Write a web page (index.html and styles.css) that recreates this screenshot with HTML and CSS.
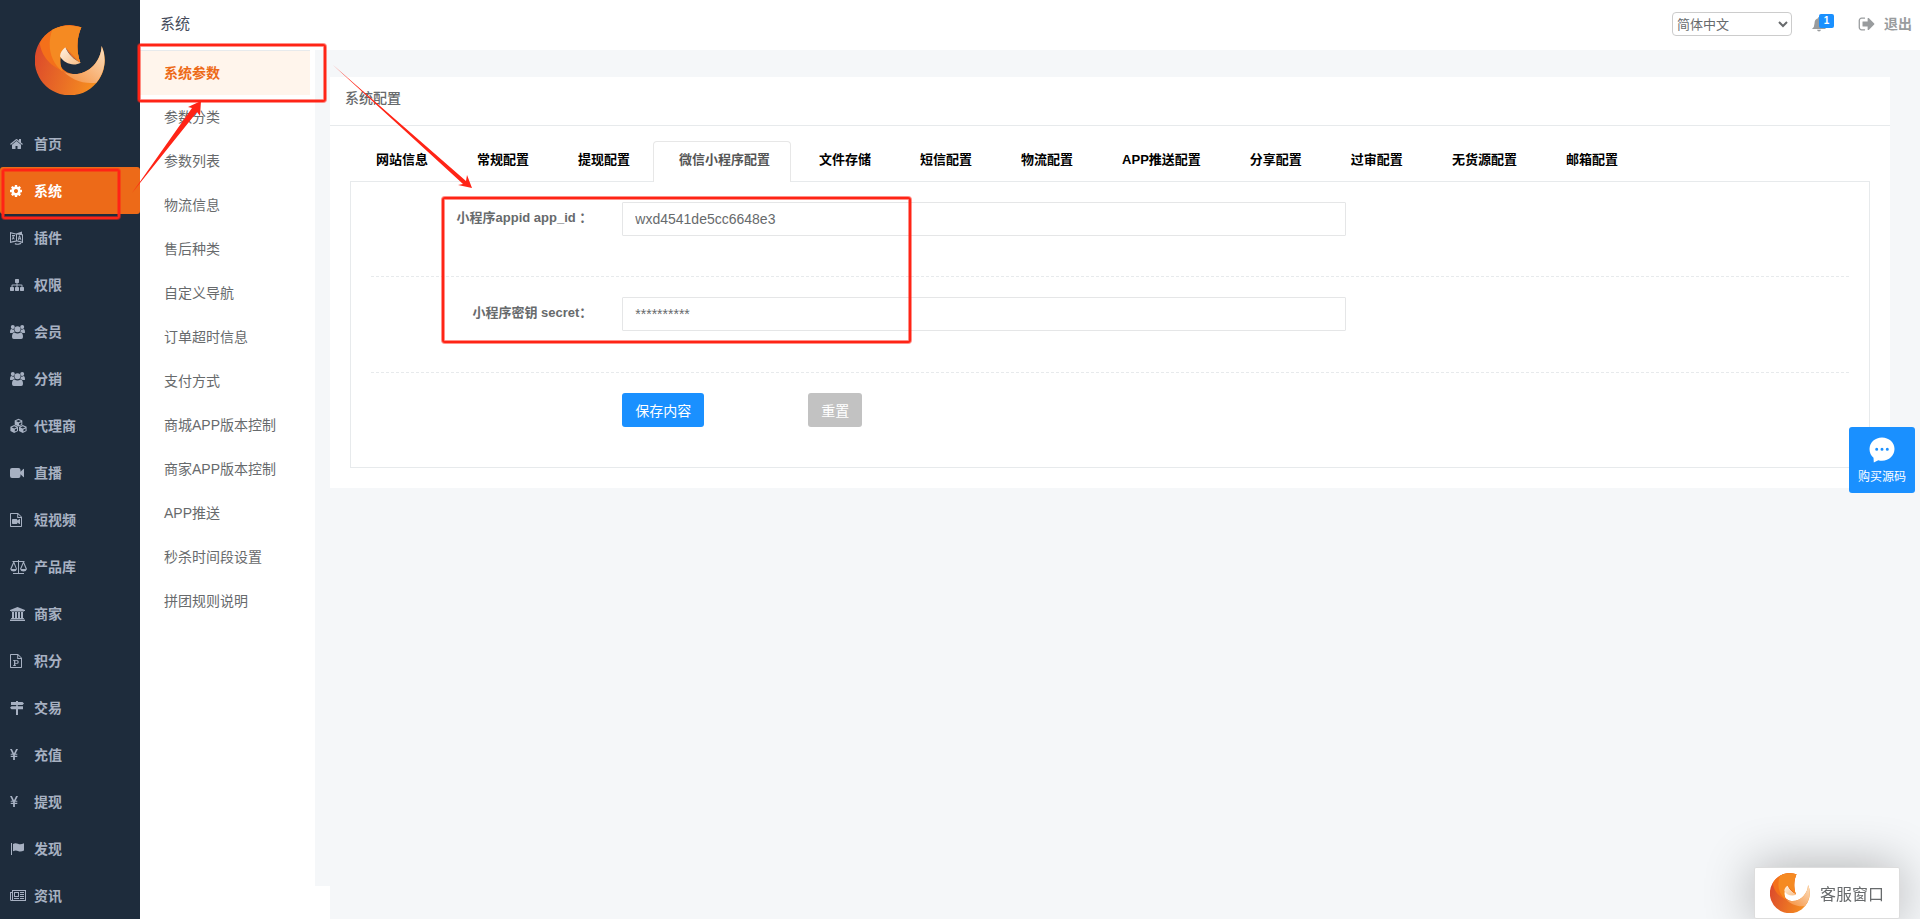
FILE: index.html
```html
<!DOCTYPE html>
<html lang="zh-CN">
<head>
<meta charset="utf-8">
<title>系统配置</title>
<link rel="stylesheet" href="styles.css">
</head>
<body>
<svg class="defs" aria-hidden="true">
  <defs>
    <linearGradient id="g-base" x1="0" y1="0.4" x2="1" y2="0.7"><stop offset="0" stop-color="#dc4a2b"/><stop offset="1" stop-color="#f8951f"/></linearGradient>
    <linearGradient id="g-tail" x1="0" y1="1" x2="1" y2="0"><stop offset="0" stop-color="#f48a35"/><stop offset="1" stop-color="#fce0c0"/></linearGradient>
    <linearGradient id="g-leaf" x1="0" y1="0" x2="1" y2="1"><stop offset="0" stop-color="#fff3e4"/><stop offset="1" stop-color="#f8bd84"/></linearGradient>
    <symbol id="logo" viewBox="0 0 210 210">
      <path fill="url(#g-base)" d="M139 7A105 105 0 1 0 200 63C198 110 160 150 114 147C88 143 70 128 74 100L91 67C100 85 115 103 136 113C122 75 126 35 139 7Z"/>
      <path fill="#f4701a" d="M14 55C30 20 70 0 105 0L139 7C126 35 122 75 136 113L91 67L74 100C70 128 88 143 114 147C80 140 25 120 14 55Z"/>
      <path fill="#f58a22" d="M52 14Q90-6 139 7C126 35 122 75 136 113L91 67C78 80 70 105 83 140C45 110 35 60 52 14Z"/>
      <path fill="url(#g-tail)" d="M200 63A105 105 0 0 1 184 173C145 178 105 165 76 128C85 142 98 147 114 147C160 150 198 110 200 63Z"/>
      <path fill="url(#g-leaf)" d="M91 67C100 88 118 105 137 113C118 124 88 118 75 94C76 82 82 75 91 67Z"/>
    </symbol>
    <symbol id="i-home" viewBox="64 -128 2048 2048" preserveAspectRatio="xMinYMid"><path d="M1472 992v480q0 26-19 45t-45 19h-384v-384h-256v384h-384q-26 0-45-19t-19-45v-480q0-1 .5-3t.5-3l575-474 575 474q1 2 1 6zm223-69l-62 74q-8 9-21 11h-3q-13 0-21-7l-692-577-692 577q-12 8-24 7-13-2-21-11l-62-74q-8-10-7-23.5t11-21.5l719-599q32-26 76-26t76 26l244 204v-195q0-14 9-23t23-9h192q14 0 23 9t9 23v408l219 182q10 8 11 21.500t-7 23.500z"/></symbol>
    <symbol id="i-cog" viewBox="128 -128 2048 2048" preserveAspectRatio="xMinYMid"><path d="M1152 896q0-106-75-181t-181-75-181 75-75 181 75 181 181 75 181-75 75-181zm512-109v222q0 12-8 23t-20 13l-185 28q-19 54-39 91 35 50 107 138 10 12 10 25t-9 23q-27 37-99 108t-94 71q-12 0-26-9l-138-108q-44 23-91 38-16 136-29 186-7 28-36 28h-222q-14 0-24.5-8.5t-11.5-21.5l-28-184q-49-16-90-37l-141 107q-10 9-25 9-14 0-25-11-126-114-165-168-7-10-7-23 0-12 8-23 15-21 51-66.5t54-70.5q-27-50-41-99l-183-27q-13-2-21-12.5t-8-23.5v-222q0-12 8-23t19-13l186-28q14-46 39-92-40-57-107-138-10-12-10-24 0-10 9-23 26-36 98.5-107.5t94.5-71.5q13 0 26 10l138 107q44-23 91-38 16-136 29-186 7-28 36-28h222q14 0 24.5 8.5t11.5 21.5l28 184q49 16 90 37l142-107q9-9 24-9 13 0 25 10 129 119 165 170 7 8 7 22 0 12-8 23-15 21-51 66.5t-54 70.5q26 50 41 98l183 28q13 2 21 12.500t8 23.500z"/></symbol>
    <symbol id="i-plugin" viewBox="0 0 17 16"><path fill-rule="evenodd" d="M0 2l6 1.500 6-2V4l1 .5v8.500l-6-1.500-7 1.500zM1 3.400v8.200l5-1.200V4.500zM7 4.600v5.600l5 1.400V5.300zM2 5h3v1H4.400L3.800 8l1 1-.6.6L3.300 8.800 2.200 9.700 1.700 9l1-1L2.200 6.500l.7-.3.4.8.4-1H2zM9 5.500h1l1.600 5-1-.3-.3-.9H9l-.2.7-1-.3zm.5 1.400L9.200 8.300h.7zM5 13q2.500 1.300 5 0l1-.6.2 1.600-1 .2q-3 1-5.500 0z"/></symbol>
    <symbol id="i-sitemap" viewBox="0 -128 2048 2048" preserveAspectRatio="xMinYMid"><path d="M1792 1248v320q0 40-28 68t-68 28h-320q-40 0-68-28t-28-68v-320q0-40 28-68t68-28h96v-192h-512v192h96q40 0 68 28t28 68v320q0 40-28 68t-68 28h-320q-40 0-68-28t-28-68v-320q0-40 28-68t68-28h96v-192h-512v192h96q40 0 68 28t28 68v320q0 40-28 68t-68 28h-320q-40 0-68-28t-28-68v-320q0-40 28-68t68-28h96v-192q0-52 38-90t90-38h512v-192h-96q-40 0-68-28t-28-68v-320q0-40 28-68t68-28h320q40 0 68 28t28 68v320q0 40-28 68t-68 28h-96v192h512q52 0 90 38t38 90v192h96q40 0 68 28t28 68z"/></symbol>
    <symbol id="i-users" viewBox="0 0 17 16"><circle cx="2.800" cy="3" r="2"/><circle cx="12.200" cy="3" r="2"/><circle cx="7.500" cy="5.200" r="3"/><path d="M0 8.500Q0 5 1.500 5Q2.800 6 4 5.600Q4 7 4.700 8Q3.300 8 2.500 9H1Q0 9 0 8.500zM15 8.500Q15 5 13.500 5Q12.200 6 11 5.600Q11 7 10.300 8Q11.700 8 12.500 9H14Q15 9 15 8.500zM2 13Q2 8.500 4.500 8.500Q7.500 10.500 10.500 8.500Q13 8.500 13 13Q13 15 11.200 15H3.800Q2 15 2 13z"/></symbol>
    <symbol id="i-cubes" viewBox="0 0 17 16"><path fill-rule="evenodd" d="M8.500.8l3.800 1.700v4.200L8.500 8.500 4.700 6.700V2.500zm0 1.200L6 3.100l2.500 1.100L11 3.100zm.6 3.200v2l2.200-1V4.200zM4.200 7.100L8 8.800V13l-3.800 1.900L.4 13V8.800zm0 1.200L1.700 9.400l2.500 1.100 2.500-1.100zm.6 3.200v2l2.200-1v-2zM12.800 7.100l3.800 1.700V13l-3.800 1.900L9 13V8.800zm0 1.200l-2.500 1.100 2.500 1.100 2.500-1.100zm.6 3.200v2l2.200-1v-2z"/></symbol>
    <symbol id="i-video" viewBox="0 0 17 16"><path d="M2 3h6.500q2 0 2 2v1.800L13.300 4Q14 3.500 14 4.300v7.400q0 .8-.7.300L10.500 9.200V11q0 2-2 2H2q-2 0-2-2V5q0-2 2-2z"/></symbol>
    <symbol id="i-filevideo" viewBox="0 0 17 16"><path fill-rule="evenodd" d="M.8 1H8l4 4v9.200q0 .8-.8.800H.8Q0 15 0 14.200V1.800Q0 1 .8 1zM1 2v12h10V6H7.200V2zm7.200.4V5H11zM2.800 7h3.700q.8 0 .8.800v.8L9.500 7H10v5h-.5L7.300 10.400v.8q0 .8-.8.800H2.800q-.8 0-.8-.8V7.800Q2 7 2.800 7z"/></symbol>
    <symbol id="i-scale" viewBox="0 0 17 16"><path d="M8 1h1v1h5.500v1H9v11h5v1H3v-1h5V3H2.500V2H8z"/><path fill-rule="evenodd" d="M3.500 2.500h.6L7 10Q6.500 12.500 3.700 12.500T.2 10zM3.800 4.500L1.500 10H6zM13.200 2.500h.6L17 10q-.8 2.500-3.500 2.500T10 10zM13.500 4.500L11.200 10h4.500z"/></symbol>
    <symbol id="i-bank" viewBox="0 0 17 16"><path d="M7.500 1L15 4v1h-1v.6H1V5H0V4zM2 6h2v6h1V6h2v6h1V6h2v6h1V6h2v6h.6q.4 0 .4.400V13H1v-.6q0-.4.400-.4H2zM.5 13.500h14q.5 0 .5.500v1H0v-1q0-.5.500-.5z"/></symbol>
    <symbol id="i-filep" viewBox="0 0 17 16"><path fill-rule="evenodd" d="M.8 1H8l4 4v9.200q0 .8-.8.800H.8Q0 15 0 14.200V1.800Q0 1 .8 1zM1 2v12h10V6H7.200V2zm7.200.4V5H11zM3 7h3.500q2.300 0 2.300 2T6.500 11H5.300v1.200H6V13H3v-.8h1V7.800H3zm2.300.8v2.400h1q1.200 0 1.200-1.200T6.300 7.800z"/></symbol>
    <symbol id="i-signs" viewBox="0 0 17 16"><path d="M6 1h2v1h4.500L14 3.500 12.500 5H1V2h5zM6 5.300h2v1H13v3H8V15H6V9.300H1.500L0 7.800l1.500-1.500H6z"/></symbol>
    <symbol id="i-yen" viewBox="0 0 17 16"><path d="M0 2h1.900L4 6.300 6.100 2H8L5.600 6.700h1.700v1.100H4.900v1h2.400v1.100H4.900V13H3.100V9.900H.7V8.800h2.400v-1H.7V6.700h1.700z"/></symbol>
    <symbol id="i-flag" viewBox="0 0 17 16"><path d="M1 2h1v12H1zM3 3q2.500-1.500 5-.2t6-.6v7.300q-3.500 1.600-6 .4T3 10.300z"/></symbol>
    <symbol id="i-news" viewBox="0 0 17 16"><path fill-rule="evenodd" d="M2 2h14v11H1.500Q0 13 0 11.500V4h2zM3 3v9h12V3zM1 5v6.500q0 .5.500.5T2 11.500V5zM4 4h5v5H4zm1 1v3h3V5zM10 4h4v1h-4zM10 6h4v1h-4zM10 8h4v1h-4zM4 10h5v1H4zM10 10h4v1h-4z"/></symbol>
    <symbol id="i-bell" viewBox="1 0 14 15"><path d="M8 0q1 0 1 1.200Q12.500 2 12.500 6.500q0 3.500 2.500 5.500H1Q3.500 10 3.500 6.500 3.500 2 7 1.200 7 0 8 0zM6 12.700h4Q9.700 14.500 8 14.500T6 12.700z"/></symbol>
    <symbol id="i-signout" viewBox="0 0 1792 1792"><path d="M704 1440q0 4 1 20t.5 26.500-3 23.500-10 19.500-20.500 6.500h-320q-119 0-203.500-84.500t-84.500-203.500v-704q0-119 84.500-203.500t203.500-84.500h320q13 0 22.500 9.500t9.500 22.500q0 4 1 20t.5 26.500-3 23.500-10 19.500-20.500 6.500h-320q-66 0-113 47t-47 113v704q0 66 47 113t113 47h312l11.500 1 11.500 3 8 5.500 7 9 2 13.500zm928-544q0 26-19 45l-544 544q-19 19-45 19t-45-19-19-45v-288h-448q-26 0-45-19t-19-45v-384q0-26 19-45t45-19h448v-288q0-26 19-45t45-19 45 19l544 544q19 19 19 45z"/></symbol>
    <symbol id="i-chat" viewBox="0 0 26 26"><path fill-rule="evenodd" d="M13 .5C6 .5 .5 5.500 .5 12c0 3.600 1.500 6.500 4 8.800L4.800 25.500l4.500-2.200q1.800.5 3.700.5c7 0 12.500-5.300 12.500-11.800S20 .5 13 .5zM7.700 10.700a1.500 1.500 0 1 1 0 3 1.500 1.500 0 0 1 0-3zm5.300 0a1.500 1.500 0 1 1 0 3 1.500 1.500 0 0 1 0-3zm5.300 0a1.500 1.500 0 1 1 0 3 1.500 1.500 0 0 1 0-3z"/></symbol>
  </defs>
</svg>

<div class="app">
  <aside class="sidebar">
    <a class="brand" href="#" aria-label="首页"><svg><use href="#logo"/></svg></a>
    <nav class="menu">
      <a href="#"><svg><use href="#i-home"/></svg>首页</a>
      <a href="#" class="active"><svg><use href="#i-cog"/></svg>系统</a>
      <a href="#"><svg><use href="#i-plugin"/></svg>插件</a>
      <a href="#"><svg><use href="#i-sitemap"/></svg>权限</a>
      <a href="#"><svg><use href="#i-users"/></svg>会员</a>
      <a href="#"><svg><use href="#i-users"/></svg>分销</a>
      <a href="#"><svg><use href="#i-cubes"/></svg>代理商</a>
      <a href="#"><svg><use href="#i-video"/></svg>直播</a>
      <a href="#"><svg><use href="#i-filevideo"/></svg>短视频</a>
      <a href="#"><svg><use href="#i-scale"/></svg>产品库</a>
      <a href="#"><svg><use href="#i-bank"/></svg>商家</a>
      <a href="#"><svg><use href="#i-filep"/></svg>积分</a>
      <a href="#"><svg><use href="#i-signs"/></svg>交易</a>
      <a href="#"><svg><use href="#i-yen"/></svg>充值</a>
      <a href="#"><svg><use href="#i-yen"/></svg>提现</a>
      <a href="#"><svg><use href="#i-flag"/></svg>发现</a>
      <a href="#"><svg><use href="#i-news"/></svg>资讯</a>
    </nav>
  </aside>

  <div class="page">
    <header class="topbar">
      <h1>系统</h1>
      <div class="tools">
        <select aria-label="语言"><option>简体中文</option></select>
        <a class="bell" href="#" aria-label="消息"><svg><use href="#i-bell"/></svg><span class="badge">1</span></a>
        <a class="logout" href="#"><svg><use href="#i-signout"/></svg>退出</a>
      </div>
    </header>

    <div class="columns">
      <div class="side">
        <nav class="submenu">
          <a href="#" class="active">系统参数</a>
          <a href="#">参数分类</a>
          <a href="#">参数列表</a>
          <a href="#">物流信息</a>
          <a href="#">售后种类</a>
          <a href="#">自定义导航</a>
          <a href="#">订单超时信息</a>
          <a href="#">支付方式</a>
          <a href="#">商城APP版本控制</a>
          <a href="#">商家APP版本控制</a>
          <a href="#">APP推送</a>
          <a href="#">秒杀时间段设置</a>
          <a href="#">拼团规则说明</a>
        </nav>
        <div class="side-foot"></div>
      </div>

      <main class="content">
        <section class="card">
          <h2>系统配置</h2>
          <div class="card-body">
            <nav class="tabs">
              <a href="#">网站信息</a>
              <a href="#">常规配置</a>
              <a href="#">提现配置</a>
              <a href="#" class="active">微信小程序配置</a>
              <a href="#">文件存储</a>
              <a href="#">短信配置</a>
              <a href="#">物流配置</a>
              <a href="#">APP推送配置</a>
              <a href="#">分享配置</a>
              <a href="#">过审配置</a>
              <a href="#">无货源配置</a>
              <a href="#">邮箱配置</a>
            </nav>
            <form class="panel">
              <div class="row">
                <label for="appid">小程序appid app_id ：</label>
                <input id="appid" type="text" value="wxd4541de5cc6648e3">
              </div>
              <hr>
              <div class="row">
                <label for="secret">小程序密钥 secret：</label>
                <input id="secret" type="text" value="**********">
              </div>
              <hr>
              <div class="row">
                <div class="actions">
                  <button class="save" type="button">保存内容</button>
                  <button class="reset" type="reset">重置</button>
                </div>
              </div>
            </form>
          </div>
        </section>
      </main>
    </div>
  </div>
</div>

<button class="buy" type="button"><svg><use href="#i-chat"/></svg>购买源码</button>
<button class="service" type="button"><svg><use href="#logo"/></svg>客服窗口</button>

<svg class="marks" aria-hidden="true">
  <g class="halo"><rect x="139" y="45" width="186" height="56" rx="2"/><rect x="3" y="170" width="116" height="48" rx="2"/><rect x="443" y="198" width="467" height="144" rx="2"/></g>
  <g class="line"><rect x="139" y="45" width="186" height="56" rx="2"/><rect x="3" y="170" width="116" height="48" rx="2"/><rect x="443" y="198" width="467" height="144" rx="2"/></g>
  <path d="M132 193L192 108L188 107L201 101L200 116L197 112Z"/>
  <path d="M333 65L466 181L467 175L472 188L458 185L463 184Z"/>
</svg>
</body>
</html>
```
FILE: styles.css
```css
* { box-sizing: border-box; }

body {
  margin: 0;
  background: #f5f7f9;
  color: #676a6c;
  font: 14px/20px "Liberation Sans", "Noto Sans CJK SC", sans-serif;
}

a { color: inherit; text-decoration: none; }
button, input, select { font-family: inherit; color: inherit; }

.defs { position: absolute; width: 0; height: 0; }

.app { display: flex; height: 100vh; overflow: hidden; }

/* primary navigation */
.sidebar { flex: 0 0 140px; background: #1e2c3c; overflow: hidden; }
.brand { display: flex; justify-content: center; height: 120px; padding-top: 25px; }
.brand svg { width: 70px; height: 70px; }
.menu a {
  display: flex;
  align-items: center;
  gap: 7px;
  height: 47px;
  padding-left: 10px;
  border-radius: 3px;
  color: #a7b1c2;
  font-weight: 700;
}
.menu svg { width: 17px; height: 16px; fill: currentColor; }
.menu .active { background: #ed6a18; color: #fff; }

/* top bar */
.page { flex: 1; min-width: 0; display: flex; flex-direction: column; }
.topbar {
  display: flex;
  justify-content: space-between;
  align-items: flex-start;
  height: 50px;
  padding: 0 8px 0 20px;
  background: #fff;
}
.topbar h1 { margin: 0; font-size: 15px; line-height: 48px; font-weight: 400; color: #464c5b; }
.tools { display: flex; align-items: center; height: 48px; color: #999c9e; font-weight: 700; }
.tools svg { fill: currentColor; }
.tools select {
  width: 120px;
  height: 24px;
  margin-right: 20px;
  border: 1px solid #ccc;
  border-radius: 4px;
  background-color: #fff;
  color: #676a6c;
  font-size: 13px;
}
.bell { position: relative; width: 22px; height: 20px; margin-right: 24px; }
.bell svg { display: block; width: 14px; height: 15px; margin-top: 3px; }
.badge {
  position: absolute;
  top: 0;
  right: 0;
  width: 15px;
  height: 14px;
  border-radius: 2px;
  background: #1a90ff;
  color: #fff;
  font-size: 10px;
  line-height: 14px;
  text-align: center;
}
.logout { display: flex; align-items: center; gap: 8px; }
.logout svg { width: 18px; height: 18px; }

/* secondary navigation */
.columns { flex: 1; display: flex; min-height: 0; }
.side { flex: 0 0 190px; display: flex; flex-direction: column; }
.submenu { flex: 1; width: 175px; padding-right: 5px; background: #fff; }
.submenu a { display: block; padding-left: 24px; line-height: 44px; }
.submenu .active { border-top: 1px solid #e7eaec; background: #fff5ec; color: #ed6a18; font-weight: 700; }
.side-foot { height: 33px; background: #fff; }

/* settings card */
.content { flex: 1; min-width: 0; padding: 27px 30px 0 0; }
.card { background: #fff; }
.card h2 {
  margin: 0;
  padding: 4px 15px 10px;
  border-bottom: 1px solid #e7eaec;
  font-size: 14px;
  line-height: 34px;
  font-weight: 500;
}
.card-body { padding: 15px 20px 20px; }

.tabs { display: flex; gap: 2px; }
.tabs a {
  height: 40px;
  padding: 0 20px 0 25px;
  border: 1px solid transparent;
  border-bottom: 0;
  border-radius: 4px 4px 0 0;
  color: #000;
  font-size: 13px;
  line-height: 36px;
  font-weight: 700;
  white-space: nowrap;
}
.tabs .active {
  position: relative;
  height: 41px;
  margin-bottom: -1px;
  border-color: #e7e7e7;
  background: #fff;
  color: #555;
}

.panel { padding: 20px 20px 40px; border: 1px solid #e7eaec; }
.row { display: grid; grid-template-columns: repeat(12, 1fr); margin: 0 -15px; }
.row label {
  grid-column: 1 / span 2;
  padding: 6px 15px 0 0;
  text-align: right;
  font-size: 13px;
  font-weight: 700;
}
.row input {
  grid-column: 3 / span 6;
  min-width: 0;
  height: 34px;
  margin: 0 15px;
  padding: 0 12px;
  border: 1px solid #e5e6e7;
  border-radius: 1px;
  background: #fff;
  font-size: 14px;
}
.panel hr { height: 0; margin: 40px 0 20px; border: 0; border-top: 1px dashed #e7eaec; }
.row + hr ~ .row + hr { margin-top: 41px; }
.actions { grid-column: 3 / span 6; display: flex; gap: 104px; padding: 0 15px; }
.actions button {
  height: 34px;
  padding: 0 13px;
  border: 0;
  border-radius: 3px;
  color: #fff;
  font-size: 14px;
}
.save { background: #1a90ff; }
.reset { background: #c2c2c2; }

/* floating widgets */
.buy {
  position: fixed;
  top: 427px;
  right: 5px;
  display: flex;
  flex-direction: column;
  align-items: center;
  gap: 5px;
  width: 66px;
  height: 66px;
  padding: 10px 0 0;
  border: 0;
  border-radius: 3px;
  background: #1a90ff;
  color: #fff;
  font-size: 12px;
  line-height: 18px;
}
.buy svg { width: 26px; height: 26px; fill: #fff; }
.service {
  position: fixed;
  right: 20px;
  bottom: 0;
  display: flex;
  align-items: center;
  gap: 10px;
  height: 52px;
  padding: 0 15px;
  border: 1px solid #ddd;
  border-radius: 2px;
  background: #fff;
  box-shadow: 0 0 50px rgba(0, 0, 0, 0.3);
  font-size: 16px;
}
.service svg { width: 40px; height: 40px; }

/* guide marks over the page */
.marks { position: absolute; top: 0; left: 0; width: 100%; height: 100%; pointer-events: none; fill: #ff2416; }
.marks rect { fill: none; }
.halo { stroke: #ff2416; stroke-opacity: 0.5; stroke-width: 4; }
.line { stroke: #ff2416; stroke-width: 2; }
```
